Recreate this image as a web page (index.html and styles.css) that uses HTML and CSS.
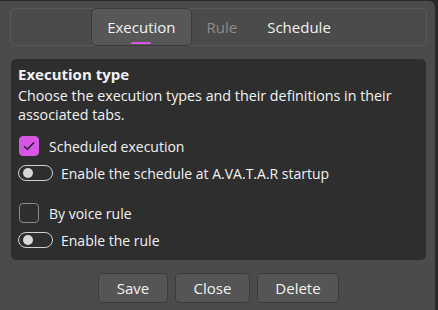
FILE: index.html
```html
<!DOCTYPE html>
<html>
<head>
<meta charset="utf-8">
<link rel="stylesheet" href="styles.css">
</head>
<body>
<div class="window">
  <div class="tabbar">
    <div class="tab active">Execution<span class="underline"></span></div>
    <div class="tab disabled">Rule</div>
    <div class="tab">Schedule</div>
  </div>
  <div class="panel">
    <div class="title">Execution type</div>
    <div class="desc">Choose the execution types and their definitions in their associated tabs.</div>
    <div class="row check-row">
      <span class="checkbox checked">
        <svg width="12" height="10" viewBox="0 0 12 10"><path d="M1 5.2 L4.3 8.3 L11 1.5" fill="none" stroke="#1e1e1e" stroke-width="1.5"/></svg>
      </span>
      <span class="label">Scheduled execution</span>
    </div>
    <div class="row toggle-row">
      <span class="toggle"><span class="knob"></span></span>
      <span class="label">Enable the schedule at A.VA.T.A.R startup</span>
    </div>
    <div class="row check-row gap-top">
      <span class="checkbox"></span>
      <span class="label">By voice rule</span>
    </div>
    <div class="row toggle-row">
      <span class="toggle"><span class="knob"></span></span>
      <span class="label">Enable the rule</span>
    </div>
  </div>
  <div class="buttons">
    <button class="btn save">Save</button>
    <button class="btn close">Close</button>
    <button class="btn delete">Delete</button>
  </div>
</div>
</body>
</html>
```
FILE: styles.css
```css
html, body {
  margin: 0;
  padding: 0;
  background: #2a2a2a;
}
body {
  font-family: "Open Sans", "Noto Sans", sans-serif;
  color: #f2f2f2;
  font-size: 13px;
}
.window {
  width: 435px;
  height: 309px;
  margin-top: 1px;
  background: #4b4b4b;
  border-radius: 0 6px 0 0;
  box-sizing: border-box;
  padding: 7px 8px 0 10px;
  display: flex;
  flex-direction: column;
}
.tabbar {
  height: 38px;
  box-sizing: border-box;
  border: 1px solid #5a5a5a;
  border-radius: 6px;
  display: flex;
  justify-content: center;
  align-items: stretch;
}
.tab {
  position: relative;
  display: flex;
  align-items: center;
  padding: 0 15px;
  font-size: 15px;
  color: #f2f2f2;
}
.tab.active {
  margin: -1px 0;
  background: #575757;
  border: 1px solid #3a3a3a;
  border-radius: 5px;
  padding: 0 15px 1px;
}
.tab.disabled {
  color: #8c8c8c;
}
.underline {
  position: absolute;
  left: 50%;
  bottom: 1px;
  width: 20px;
  height: 2px;
  margin-left: -10px;
  background: #d656e6;
  border-radius: 1px;
}
.panel {
  margin: 13px 1px 0 1px;
  height: 201px;
  box-sizing: border-box;
  background: #2e2e2e;
  border-radius: 5px;
  padding: 6px 8px 0 7px;
}
.title {
  font-weight: 700;
  font-size: 15px;
  line-height: 19px;
}
.desc {
  font-size: 14.3px;
  line-height: 19px;
  margin-top: 2px;
}
.row {
  display: flex;
  align-items: center;
}
.check-row {
  height: 20px;
  margin-top: 12px;
}
.check-row.gap-top {
  margin-top: 22px;
}
.toggle-row {
  height: 16px;
  margin-top: 9px;
}
.checkbox {
  width: 20px;
  height: 20px;
  box-sizing: border-box;
  border: 1px solid #8a8a8a;
  border-radius: 4px;
  margin-left: 1px;
  display: flex;
  align-items: center;
  justify-content: center;
}
.checkbox.checked {
  background: #d656e6;
  border-color: #d656e6;
}
.check-row .label {
  margin-left: 10px;
  font-size: 14px;
}
.toggle {
  width: 35px;
  height: 16px;
  box-sizing: border-box;
  border: 1px solid #cfcfcf;
  border-radius: 8px;
  position: relative;
}
.knob {
  position: absolute;
  left: 4px;
  top: 2px;
  width: 10px;
  height: 10px;
  border-radius: 50%;
  background: #d8d8d8;
}
.toggle-row .label {
  margin-left: 8px;
  font-size: 14px;
}
.buttons {
  display: flex;
  justify-content: center;
  gap: 7px;
  margin-top: 13px;
}
.btn {
  font-family: inherit;
  font-size: 15px;
  color: #f2f2f2;
  background: #555555;
  border: 1px solid #3c3c3c;
  border-radius: 4px;
  height: 30px;
  padding: 0;
}
.save { width: 70px; }
.close { width: 75px; }
.delete { width: 82px; }
```
